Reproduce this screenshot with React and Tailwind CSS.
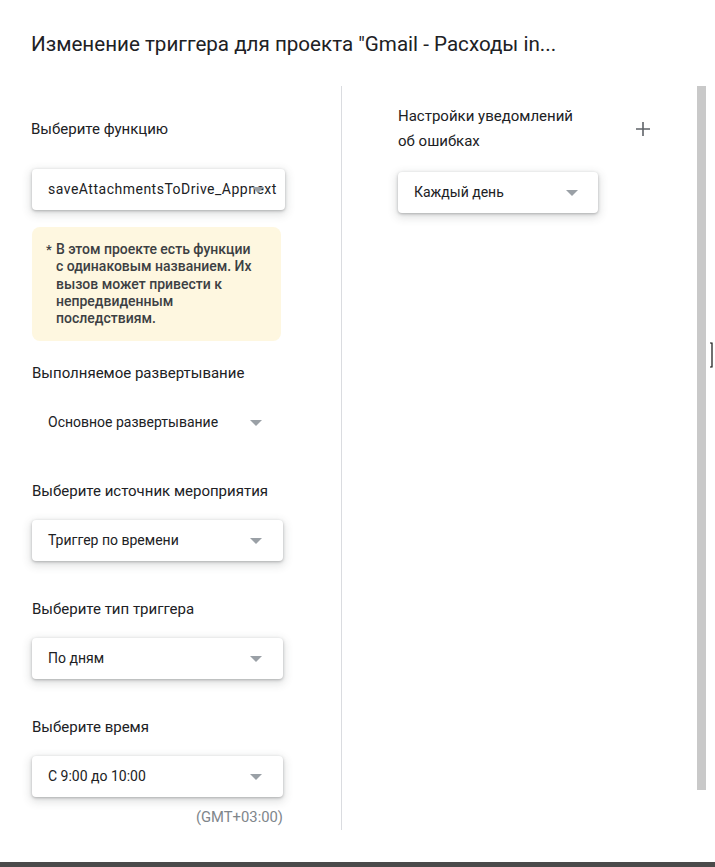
import React from "react";

const font = { fontFamily: "Roboto, 'Noto Sans', Arial, sans-serif" };

function Arrow({ className = "" }) {
  return (
    <svg width="12" height="6" viewBox="0 0 12 6" className={`absolute top-1/2 -translate-y-1/2 ${className}`}>
      <path d="M0 0h12L6 6z" fill="#9aa0a6" />
    </svg>
  );
}

function Select({ value, flat = false, className = "", textClass = "", arrowClass = "right-[21px]" }) {
  return (
    <div
      className={`relative flex h-[41px] items-center rounded-[4px] bg-white pl-[16px] ${
        flat ? "" : "shadow-[0_1px_3px_rgba(60,64,67,0.35),0_3px_8px_2px_rgba(60,64,67,0.15)]"
      } ${className}`}
    >
      <span className={`whitespace-nowrap text-[14px] text-[#202124] ${textClass}`}>{value}</span>
      <Arrow className={arrowClass} />
    </div>
  );
}

function Label({ children, className = "" }) {
  return <div className={`text-[15px] leading-[20px] text-[#202124] ${className}`}>{children}</div>;
}

export default function App() {
  return (
    <div className="relative flex h-[867px] w-[715px] flex-col overflow-hidden bg-white" style={font}>
      {/* Title */}
      <h1 className="pl-[31px] pt-[30px] text-[20.6px] leading-[28px] text-[#202124]">
        Изменение триггера для проекта "Gmail - Расходы in...
      </h1>

      <div className="mt-[28px] flex flex-1">
        {/* Left column */}
        <div className="w-[341px] pl-[32px] pr-[58px] pt-[33px]">
          <Label className="-ml-px">Выберите функцию</Label>
          <Select
            value="saveAttachmentsToDrive_Appnext"
            className="mt-[30px] mr-[-2px]"
            textClass="tracking-[0.5px]"
          />

          <div className="mt-[17px] mr-[2px] flex h-[114px] rounded-[8px] bg-[#fef7e0] pl-[14px] pt-[14px] text-[14px] font-medium leading-[17.3px] text-[#3c4043]">
            <span className="w-[10px] shrink-0 text-[13px]">*</span>
            <span className="whitespace-nowrap">
              В этом проекте есть функции
              <br />с одинаковым названием. Их
              <br />
              вызов может привести к
              <br />
              непредвиденным
              <br />
              последствиям.
            </span>
          </div>

          <Label className="mt-[22px]">Выполняемое развертывание</Label>
          <Select value="Основное развертывание" flat className="mt-[19px]" />

          <Label className="mt-[38px]">Выберите источник мероприятия</Label>
          <Select value="Триггер по времени" className="mt-[19px]" />

          <Label className="mt-[38px]">Выберите тип триггера</Label>
          <Select value="По дням" className="mt-[19px]" />

          <Label className="mt-[38px]">Выберите время</Label>
          <Select value="С 9:00 до 10:00" className="mt-[19px]" />

          <div className="mt-[11px] text-right text-[14.8px] leading-[18px] text-[#80868b]">(GMT+03:00)</div>
        </div>

        {/* Divider */}
        <div className="h-[744px] w-px bg-[#dadce0]" />

        {/* Right column */}
        <div className="flex-1 pl-[56px] pt-[18px]">
          <div className="flex items-start">
            <div className="w-[185px] text-[15px] leading-[25px] text-[#202124]">
              Настройки уведомлений об ошибках
            </div>
            <svg width="14" height="14" viewBox="0 0 14 14" className="ml-[53px] mt-[18px]">
              <path d="M7 0v14M0 7h14" stroke="#5f6368" strokeWidth="1.6" />
            </svg>
          </div>
          <Select value="Каждый день" className="mt-[18px] h-[40px] w-[200px]" arrowClass="right-[20px]" />
        </div>

        {/* Scrollbar */}
        <div className="mr-[9px] h-[704px] w-[9px] bg-[#c9c9c9]" />
      </div>

      {/* Bottom bar */}
      <div className="h-[5px] bg-[#4a4a4a]" />

      {/* Mouse cursor */}
      <svg width="6" height="26" viewBox="0 0 6 26" className="absolute left-[709px] top-[342px]">
        <path d="M1 1h2v24H1" fill="none" stroke="#111" strokeWidth="1.2" />
      </svg>
    </div>
  );
}
